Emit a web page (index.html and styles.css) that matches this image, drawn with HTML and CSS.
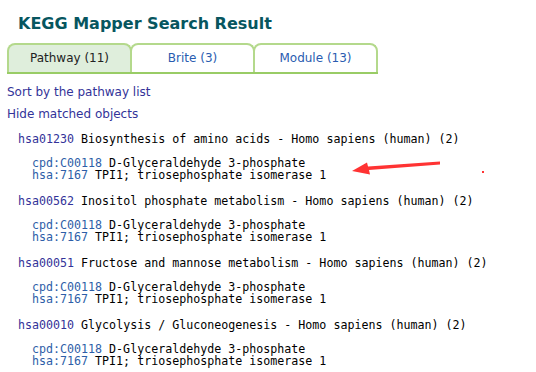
FILE: index.html
```html
<!DOCTYPE html>
<html lang="en">
<head>
    <meta charset="UTF-8">
    <meta name="viewport" content="width=device-width, initial-scale=1.0">
    <title>KEGG Mapper Search Result</title>
    <link rel="stylesheet" href="styles.css">
</head>
<body>
    <h2 class="title">KEGG Mapper Search Result</h2>

    <div class="tabs">
        <div class="tab active">Pathway (11)</div>
        <div class="tab">Brite (3)</div>
        <div class="tab">Module (13)</div>
    </div>

    <div class="links">
        <a href="#">Sort by the pathway list</a>
        <a href="#">Hide matched objects</a>
    </div>

    <div class="results">
        <div class="pathway">
            <div class="head"><a href="#">hsa01230</a> Biosynthesis of amino acids - Homo sapiens (human) (2)</div>
            <div class="entries">
                <div><a href="#">cpd:C00118</a> D-Glyceraldehyde 3-phosphate</div>
                <div><a href="#">hsa:7167</a> TPI1; triosephosphate isomerase 1</div>
            </div>
        </div>
        <div class="pathway">
            <div class="head"><a href="#">hsa00562</a> Inositol phosphate metabolism - Homo sapiens (human) (2)</div>
            <div class="entries">
                <div><a href="#">cpd:C00118</a> D-Glyceraldehyde 3-phosphate</div>
                <div><a href="#">hsa:7167</a> TPI1; triosephosphate isomerase 1</div>
            </div>
        </div>
        <div class="pathway">
            <div class="head"><a href="#">hsa00051</a> Fructose and mannose metabolism - Homo sapiens (human) (2)</div>
            <div class="entries">
                <div><a href="#">cpd:C00118</a> D-Glyceraldehyde 3-phosphate</div>
                <div><a href="#">hsa:7167</a> TPI1; triosephosphate isomerase 1</div>
            </div>
        </div>
        <div class="pathway">
            <div class="head"><a href="#">hsa00010</a> Glycolysis / Gluconeogenesis - Homo sapiens (human) (2)</div>
            <div class="entries">
                <div><a href="#">cpd:C00118</a> D-Glyceraldehyde 3-phosphate</div>
                <div><a href="#">hsa:7167</a> TPI1; triosephosphate isomerase 1</div>
            </div>
        </div>
    </div>

    <!-- hand drawn annotation -->
    <svg class="mark" width="536" height="372" viewBox="0 0 536 372">
        <path d="M440 161.5 L368 166.5 L367 162.5 L352 171 L370 174.5 L369 170 L440 164.5 Z" fill="#f33"/>
        <rect x="482" y="171" width="2" height="2" fill="#f33"/>
    </svg>
</body>
</html>
```

FILE: styles.css
```css
body {
    margin: 0;
    padding: 0 7px;
    font-family: "DejaVu Sans", Verdana, sans-serif;
    font-size: 12px;
    color: #000;
    background: #fff;
}

a {
    text-decoration: none;
}

.title {
    margin: 0;
    padding: 14px 0 0 11px;
    height: 29px;
    font-size: 16px;
    font-weight: bold;
    color: #07565f;
}

.tabs {
    display: flex;
    width: 371px;
    border-bottom: 2px solid #99cc66;
}

.tab {
    flex: 1;
    height: 27px;
    line-height: 27px;
    text-align: center;
    border: 2px solid #b4d98c;
    border-bottom: none;
    border-radius: 8px 8px 0 0;
    color: #2a5cb0;
    background: #fff;
}

.tab + .tab {
    margin-left: -2px;
}

.tab.active {
    background: #dfeedc;
    color: #222;
}

.links {
    padding-top: 10px;
}

.links a {
    display: block;
    height: 22px;
    line-height: 16px;
    color: #333399;
}

.results {
    padding: 5px 0 0 11px;
    font-family: "DejaVu Sans Mono", "Liberation Mono", monospace;
    font-size: 11.65px;
    line-height: 12px;
    white-space: nowrap;
}

.results a {
    color: #333399;
}

.pathway {
    margin-bottom: 14px;
}

.entries {
    margin-top: 12px;
    padding-left: 14px;
}

.entries a {
    color: #2d5ea8;
}

.mark {
    position: absolute;
    left: 0;
    top: 0;
    pointer-events: none;
}
```
